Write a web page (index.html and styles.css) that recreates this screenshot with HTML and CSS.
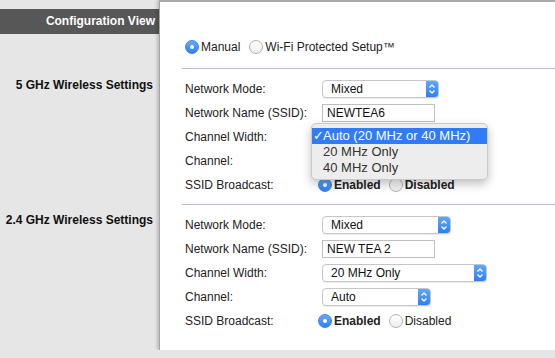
FILE: index.html
```html
<!DOCTYPE html>
<html lang="en">
<head>
    <meta charset="UTF-8">
    <meta name="viewport" content="width=device-width, initial-scale=1.0">
    <title>Wireless Settings</title>
    <link rel="stylesheet" href="styles.css">
</head>
<body>
    <div class="page">
        <aside class="sidebar">
            <div class="config-bar">Configuration View</div>
            <h2 class="side-title first">5 GHz Wireless Settings</h2>
            <h2 class="side-title second">2.4 GHz Wireless Settings</h2>
        </aside>

        <main class="panel">
            <div class="mode-row">
                <label class="choice"><span class="radio on"></span>Manual</label>
                <label class="choice"><span class="radio"></span>Wi-Fi Protected Setup™</label>
            </div>
            <div class="rule"></div>

            <!-- 5 GHz -->
            <section class="band">
                <div class="row">
                    <span class="label">Network Mode:</span>
                    <div class="select mode-a">
                        <span>Mixed</span>
                        <span class="arrow"><svg width="12" height="16" viewBox="0 0 12 16"><path d="M3.5 6.5 6 4 8.5 6.5M3.5 9.5 6 12 8.5 9.5" fill="none" stroke="#fff" stroke-width="1.3"/></svg></span>
                    </div>
                </div>
                <div class="row">
                    <span class="label">Network Name (SSID):</span>
                    <input class="text-input" type="text" value="NEWTEA6">
                </div>
                <div class="row">
                    <span class="label">Channel Width:</span>
                    <!-- select is open: its list covers it -->
                    <div class="select width-sel covered"></div>
                    <div class="menu">
                        <div class="menu-item active"><span class="check">✓</span>Auto (20 MHz or 40 MHz)</div>
                        <div class="menu-item">20 MHz Only</div>
                        <div class="menu-item">40 MHz Only</div>
                    </div>
                </div>
                <div class="row">
                    <span class="label">Channel:</span>
                    <div class="select channel-sel covered"></div>
                </div>
                <div class="row">
                    <span class="label">SSID Broadcast:</span>
                    <label class="choice first"><span class="radio on"></span><b>Enabled</b></label>
                    <label class="choice"><span class="radio"></span><b>Disabled</b></label>
                </div>
            </section>
            <div class="rule lower"></div>

            <!-- 2.4 GHz -->
            <section class="band">
                <div class="row">
                    <span class="label">Network Mode:</span>
                    <div class="select mode-b">
                        <span>Mixed</span>
                        <span class="arrow"><svg width="12" height="16" viewBox="0 0 12 16"><path d="M3.5 6.5 6 4 8.5 6.5M3.5 9.5 6 12 8.5 9.5" fill="none" stroke="#fff" stroke-width="1.3"/></svg></span>
                    </div>
                </div>
                <div class="row">
                    <span class="label">Network Name (SSID):</span>
                    <input class="text-input" type="text" value="NEW TEA 2">
                </div>
                <div class="row">
                    <span class="label">Channel Width:</span>
                    <div class="select width-sel">
                        <span>20 MHz Only</span>
                        <span class="arrow"><svg width="12" height="16" viewBox="0 0 12 16"><path d="M3.5 6.5 6 4 8.5 6.5M3.5 9.5 6 12 8.5 9.5" fill="none" stroke="#fff" stroke-width="1.3"/></svg></span>
                    </div>
                </div>
                <div class="row">
                    <span class="label">Channel:</span>
                    <div class="select channel-sel">
                        <span>Auto</span>
                        <span class="arrow"><svg width="12" height="16" viewBox="0 0 12 16"><path d="M3.5 6.5 6 4 8.5 6.5M3.5 9.5 6 12 8.5 9.5" fill="none" stroke="#fff" stroke-width="1.3"/></svg></span>
                    </div>
                </div>
                <div class="row">
                    <span class="label">SSID Broadcast:</span>
                    <label class="choice first"><span class="radio on"></span><b>Enabled</b></label>
                    <label class="choice"><span class="radio"></span>Disabled</label>
                </div>
            </section>
        </main>
    </div>
</body>
</html>
```

FILE: styles.css
```css
body {
    margin: 0;
    background: #e6e6e6;
    font-family: "Liberation Sans", Arial, sans-serif;
    font-size: 12px;
    color: #222;
}
.page {
    display: flex;
    align-items: flex-start;
}
.sidebar {
    width: 159px;
    flex-shrink: 0;
}
.config-bar {
    margin-top: 9px;
    height: 25px;
    line-height: 25px;
    background: #575757;
    color: #fff;
    font-weight: bold;
    text-align: right;
    padding-right: 4px;
}
.side-title {
    margin: 0;
    font-size: 12px;
    line-height: 14px;
    text-align: right;
    padding-right: 6px;
    color: #111;
}
.side-title.first {
    margin-top: 44px;
}
.side-title.second {
    margin-top: 121px;
}
.panel {
    flex: 1;
    height: 348px;
    background: #fff;
    border-top: 2px solid #ababab;
    border-left: 1px solid #a4a4a4;
    box-shadow: -2px 0 3px rgba(0, 0, 0, 0.18);
    padding-left: 22px;
}
.mode-row {
    display: flex;
    align-items: center;
    height: 24px;
    padding-top: 33px;
    padding-left: 3px;
}
.mode-row .choice {
    margin-right: 9px;
}
.rule {
    margin-top: 9px;
    border-top: 1px solid #bcbcd8;
}
.rule.lower {
    margin-top: 7px;
}
.band {
    padding-top: 8px;
}
.row {
    position: relative;
    display: flex;
    align-items: center;
    height: 24px;
    padding-left: 3px;
}
.label {
    width: 137px;
    flex-shrink: 0;
}
.choice {
    display: flex;
    align-items: center;
    margin-right: 5px;
}
.choice.first {
    margin-left: -4px;
    margin-right: 8px;
}
.radio {
    position: relative;
    width: 14px;
    height: 14px;
    box-sizing: border-box;
    border: 1px solid #b3b3b3;
    border-radius: 50%;
    background: linear-gradient(#fff, #eeeeee);
    margin-right: 2px;
    flex-shrink: 0;
}
.radio.on {
    border-color: #3a84ee;
    background: linear-gradient(#67abfa, #2f7ff1);
}
.radio.on::after {
    content: "";
    position: absolute;
    left: 4px;
    top: 4px;
    width: 4px;
    height: 4px;
    border-radius: 50%;
    background: #fff;
}
.select {
    display: flex;
    align-items: center;
    justify-content: space-between;
    height: 18px;
    box-sizing: border-box;
    border: 1px solid #c6c6c6;
    border-radius: 4px;
    padding-left: 8px;
    background: #fff;
    box-shadow: 0 1px 1px rgba(0, 0, 0, 0.08);
    overflow: hidden;
    color: #111;
}
.select.covered {
    visibility: hidden;
}
.arrow {
    display: flex;
    width: 12px;
    height: 100%;
    background: linear-gradient(#5ea8f9, #2d7ff2);
}
.mode-a {
    width: 117px;
}
.mode-b {
    width: 129px;
}
.width-sel {
    width: 165px;
}
.channel-sel {
    width: 109px;
}
.text-input {
    width: 113px;
    height: 18px;
    box-sizing: border-box;
    border: 1px solid #bfbfbf;
    padding: 0 4px;
    font-family: inherit;
    font-size: 12px;
    color: #111;
    margin: 0;
}
.menu {
    position: absolute;
    left: 129px;
    top: -2px;
    width: 177px;
    box-sizing: border-box;
    border: 1px solid #c9c9c9;
    border-radius: 5px;
    background: #ededed;
    padding: 4px 0 3px;
    box-shadow: 0 4px 10px rgba(0, 0, 0, 0.25);
    font-size: 13px;
    color: #333;
    z-index: 2;
}
.menu-item {
    position: relative;
    height: 16px;
    line-height: 16px;
    padding-left: 11px;
}
.menu-item.active {
    background: #2f7cf6;
    color: #fff;
}
.check {
    position: absolute;
    left: 1px;
    top: 0;
    font-family: "DejaVu Sans", sans-serif;
    font-size: 13px;
    font-weight: bold;
}
```
